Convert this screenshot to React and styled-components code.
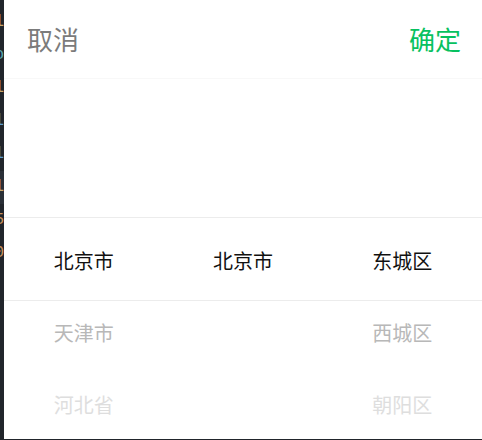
import React from "react";
import styled, { createGlobalStyle } from "styled-components";

const Global = createGlobalStyle`
  html, body { margin: 0; padding: 0; background: #21252b; }
  body { font-family: "Noto Sans CJK SC", "Noto Sans", sans-serif; }
`;

const Screen = styled.div`
  display: flex;
  width: 482px;
  height: 440px;
  background: #21252b;
  overflow: hidden;
`;

const Gutter = styled.div`
  width: 4px;
  flex: none;
  overflow: hidden;
  display: flex;
  flex-direction: column;
  align-items: flex-end;
  padding-top: 6px;
`;

const CodeLine = styled.div`
  height: 33px;
  line-height: 33px;
  white-space: nowrap;
  font-family: "Liberation Mono", monospace;
  font-size: 16px;
  color: ${(p) => p.$color};
  background: ${(p) => (p.$active ? "#2a2f37" : "transparent")};
  width: 100%;
  display: flex;
  justify-content: flex-end;
`;

const Panel = styled.div`
  flex: 1;
  height: 439px;
  background: #fff;
  display: flex;
  flex-direction: column;
`;

const Header = styled.div`
  height: 78px;
  flex: none;
  display: flex;
  align-items: center;
  justify-content: space-between;
  padding: 0 21px 0 23px;
  border-bottom: 1px solid #f8f8f8;
`;

const Action = styled.span`
  font-size: 26px;
  line-height: 1;
  color: ${(p) => (p.$primary ? "#07c160" : "#7b7b7b")};
`;

const Picker = styled.div`
  position: relative;
  flex: 1;
  display: grid;
  grid-template-columns: repeat(3, 1fr);
  overflow: hidden;
`;

const Indicator = styled.div`
  position: absolute;
  left: 0;
  right: 0;
  top: 138px;
  height: 84px;
  border-top: 1px solid #ececec;
  border-bottom: 1px solid #ececec;
  box-sizing: border-box;
  pointer-events: none;
`;

const Column = styled.div`
  display: flex;
  flex-direction: column;
  padding-top: 145px;
`;

const Item = styled.div`
  height: 72px;
  display: flex;
  align-items: center;
  justify-content: center;
  font-size: 20px;
  color: ${(p) => ["#111", "#b8b8b8", "#dedede", "#eee"][p.$dist] || "#eee"};
`;

const code = [
  { t: "tl", c: "#c8a66a" },
  { t: "o", c: "#5aa6ad" },
  { t: "l", c: "#c8a66a" },
  { t: "l", c: "#5d9bd0" },
  { t: "l", c: "#5d9bd0" },
  { t: "l", c: "#c8a66a", a: true },
  { t: "5", c: "#c8925e" },
  { t: "0", c: "#c8925e" },
  { t: " ", c: "#abb2bf" },
];

const columns = [
  ["北京市", "天津市", "河北省"],
  ["北京市"],
  ["东城区", "西城区", "朝阳区"],
];

export default function App() {
  return (
    <>
      <Global />
      <Screen>
        <Gutter>
          {code.map((l, i) => (
            <CodeLine key={i} $color={l.c} $active={l.a}>
              {l.t}
            </CodeLine>
          ))}
        </Gutter>
        <Panel>
          <Header>
            <Action>取消</Action>
            <Action $primary>确定</Action>
          </Header>
          <Picker>
            {columns.map((col, ci) => (
              <Column key={ci}>
                {col.map((name, i) => (
                  <Item key={i} $dist={i}>
                    {name}
                  </Item>
                ))}
              </Column>
            ))}
            <Indicator />
          </Picker>
        </Panel>
      </Screen>
    </>
  );
}
